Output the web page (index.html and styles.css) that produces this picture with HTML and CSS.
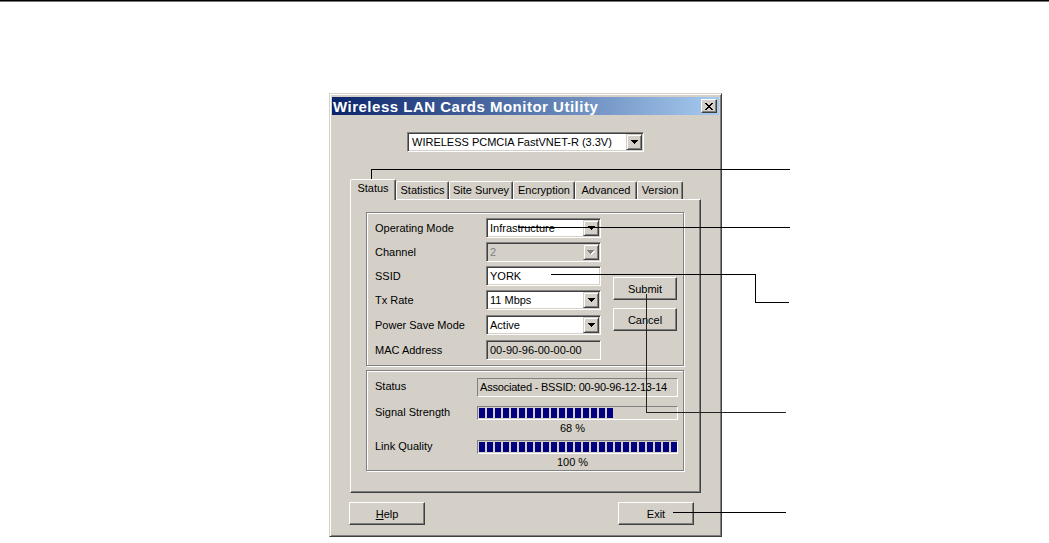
FILE: index.html
```html
<!DOCTYPE html>
<html lang="en">
<head>
<meta charset="utf-8">
<title>Wireless LAN Cards Monitor Utility</title>
<link rel="stylesheet" href="styles.css">
</head>
<body>
<div class="page">
  <div class="rule"></div>
  <div class="dialog">
    <div class="titlebar">
      <span class="title">Wireless LAN Cards Monitor Utility</span>
      <span class="close"><svg width="8" height="7" viewBox="0 0 8 7"><path d="M0 0h2v1H0z M6 0h2v1H6z M1 1h2v1H1z M5 1h2v1H5z M2 2h4v1H2z M3 3h2v1H3z M2 4h4v1H2z M1 5h2v1H1z M5 5h2v1H5z M0 6h2v1H0z M6 6h2v1H6z"/></svg></span>
    </div>
    <div class="client">
      <div class="combo device">
        <span class="value">WIRELESS PCMCIA FastVNET-R (3.3V)</span>
        <span class="drop"><svg width="7" height="4" viewBox="0 0 7 4"><path d="M0 0h7v1H0z M1 1h5v1H1z M2 2h3v1H2z M3 3h1v1H3z"/></svg></span>
      </div>
      <div class="tabs">
        <div class="tab selected">Status</div>
        <div class="tab">Statistics</div>
        <div class="tab">Site Survey</div>
        <div class="tab">Encryption</div>
        <div class="tab">Advanced</div>
        <div class="tab">Version</div>
      </div>
      <div class="panel">
        <div class="group settings">
          <div class="form">
            <span class="label">Operating Mode</span>
            <div class="combo field"><span class="value">Infrastructure</span><span class="drop"><svg width="7" height="4" viewBox="0 0 7 4"><path d="M0 0h7v1H0z M1 1h5v1H1z M2 2h3v1H2z M3 3h1v1H3z"/></svg></span></div>
            <span class="label">Channel</span>
            <div class="combo field disabled"><span class="value">2</span><span class="drop"><svg width="8" height="5" viewBox="0 0 8 5"><path class="hl" d="M1 1h7v1H1z M2 2h5v1H2z M3 3h3v1H3z M4 4h1v1H4z"/><path class="gr" d="M0 0h7v1H0z M1 1h5v1H1z M2 2h3v1H2z M3 3h1v1H3z"/></svg></span></div>
            <span class="label">SSID</span>
            <div class="edit field"><span class="value">YORK</span></div>
            <span class="label">Tx Rate</span>
            <div class="combo field"><span class="value">11 Mbps</span><span class="drop"><svg width="7" height="4" viewBox="0 0 7 4"><path d="M0 0h7v1H0z M1 1h5v1H1z M2 2h3v1H2z M3 3h1v1H3z"/></svg></span></div>
            <span class="label">Power Save Mode</span>
            <div class="combo field"><span class="value">Active</span><span class="drop"><svg width="7" height="4" viewBox="0 0 7 4"><path d="M0 0h7v1H0z M1 1h5v1H1z M2 2h3v1H2z M3 3h1v1H3z"/></svg></span></div>
            <span class="label">MAC Address</span>
            <div class="edit field readonly"><span class="value">00-90-96-00-00-00</span></div>
          </div>
          <div class="actions">
            <button class="btn small">Submit</button>
            <button class="btn small">Cancel</button>
          </div>
        </div>
        <div class="group status">
          <div class="srow">
            <span class="slabel">Status</span>
            <div class="static">Associated - BSSID: 00-90-96-12-13-14</div>
          </div>
          <div class="srow bar-row">
            <span class="slabel">Signal Strength</span>
            <div class="progress"><i></i><i></i><i></i><i></i><i></i><i></i><i></i><i></i><i></i><i></i><i></i><i></i><i></i><i></i><i></i><i></i><i></i></div>
          </div>
          <div class="pct">68 %</div>
          <div class="srow bar-row second">
            <span class="slabel">Link Quality</span>
            <div class="progress"><i></i><i></i><i></i><i></i><i></i><i></i><i></i><i></i><i></i><i></i><i></i><i></i><i></i><i></i><i></i><i></i><i></i><i></i><i></i><i></i><i></i><i></i><i></i><i></i><i></i></div>
          </div>
          <div class="pct">100 %</div>
        </div>
      </div>
      <div class="footer">
        <button class="btn wide"><u>H</u>elp</button>
        <button class="btn wide">Exit</button>
      </div>
    </div>
  </div>
  <svg class="callouts" width="1049" height="543" viewBox="0 0 1049 543">
    <path d="M371.5 179 V169.5 H790"/>
    <path d="M518 227.5 H790"/>
    <path d="M551 274.5 H755.5 V302.5 H789"/>
    <path class="soft" d="M646.5 294 V412.5 H786"/>
    <path d="M673 512.5 H786"/>
  </svg>
</div>
</body>
</html>
```

FILE: styles.css
```css
* { box-sizing: border-box; }
html, body { margin: 0; padding: 0; background: #fff; }
body { font-family: "Liberation Sans", Arial, sans-serif; font-size: 11px; color: #000; }

.page { position: relative; width: 1049px; height: 543px; overflow: hidden; }
.rule { height: 1px; background: #000; box-shadow: 0 1px 0 #777; }

/* window */
.dialog {
  width: 393px; height: 444px;
  margin: 92px 0 0 329px;
  display: flex; flex-direction: column;
  background: #d4d0c8;
  border: 1px solid; border-color: #d4d0c8 #404040 #404040 #d4d0c8;
  box-shadow: inset 1px 1px #fff, inset -1px -1px #808080;
  padding: 3px 2px 2px 2px;
}
.titlebar {
  height: 18px; flex: none;
  display: flex; align-items: center;
  padding-left: 1px;
  background: linear-gradient(to right, #0a246a, #a6caf0);
  color: #fff;
}
.title { font-weight: bold; font-size: 15px; letter-spacing: 0.5px; white-space: nowrap; }
.close {
  margin-left: auto; margin-right: 2px;
  width: 16px; height: 14px;
  display: flex; align-items: center; justify-content: center;
  background: #d4d0c8;
  border: 1px solid; border-color: #fff #404040 #404040 #fff;
  box-shadow: inset -1px -1px #808080;
}
.close svg { display: block; fill: #000; }

.client { flex: 1; display: flex; flex-direction: column; }

/* combo / edit fields */
.combo, .edit {
  display: flex; align-items: stretch;
  height: 20px;
  border: 1px solid; border-color: #808080 #fff #fff #808080;
  box-shadow: inset 1px 1px #404040, inset -1px -1px #d4d0c8;
  background: #fff;
  padding: 1px;
}
.value { flex: 1; padding-left: 2px; line-height: 16px; white-space: nowrap; overflow: hidden; }
.drop {
  width: 16px; flex: none;
  display: flex; align-items: center; justify-content: center;
  background: #d4d0c8;
  border: 1px solid; border-color: #d4d0c8 #404040 #404040 #d4d0c8;
  box-shadow: inset 1px 1px #fff, inset -1px -1px #808080;
}
.drop svg { display: block; fill: #000; }
.drop .hl { fill: #fff; }
.drop .gr { fill: #808080; }

.device { width: 237px; margin-top: 17px; align-self: center; }
.device .value { padding-left: 3px; }

/* tabs */
.tabs {
  display: flex; align-items: flex-end;
  height: 20px; margin: 27px 0 0 18px;
  position: relative; z-index: 1;
}
.tab {
  height: 18px;
  background: #d4d0c8;
  border: 1px solid; border-bottom: none;
  border-color: #fff #404040 transparent #fff;
  box-shadow: inset -1px 0 #808080;
  border-radius: 2px 2px 0 0;
  line-height: 16px; text-align: center; white-space: nowrap;
}
.tab.selected { height: 21px; margin-bottom: -1px; line-height: 17px; }
.tab:nth-child(1) { width: 46px; }
.tab:nth-child(2) { width: 53px; }
.tab:nth-child(3) { width: 64px; }
.tab:nth-child(4) { width: 62px; }
.tab:nth-child(5) { width: 62px; }
.tab:nth-child(6) { width: 46px; }

.panel {
  width: 351px; height: 294px; margin-left: 18px;
  border: 1px solid; border-color: #fff #404040 #404040 #fff;
  box-shadow: inset -1px -1px #808080;
  padding: 12px 0 0 15px;
}

/* group boxes */
.group {
  width: 318px;
  border: 1px solid #808080;
  box-shadow: 1px 1px 0 #fff, inset 1px 1px 0 #fff;
}
.settings { height: 154px; padding: 5px 0 0 8px; display: flex; }
.form {
  display: grid;
  grid-template-columns: 111px 115px;
  grid-template-rows: 24px 24px 24px 25px 25px 20px;
  align-items: start;
}
.label { height: 20px; line-height: 20px; white-space: nowrap; }
.field { width: 115px; }
.disabled { background: #d4d0c8; }
.disabled .value { color: #808080; }
.readonly { background: #d4d0c8; }

.actions { display: flex; flex-direction: column; gap: 8px; margin-left: 12px; padding-top: 59px; }

.btn {
  font: inherit; color: #000; padding: 0; margin: 0;
  background: #d4d0c8;
  border: 1px solid; border-color: #fff #404040 #404040 #fff;
  box-shadow: inset -1px -1px #808080;
  height: 23px; text-align: center; line-height: 20px;
}
.btn.small { width: 64px; }
.btn.wide { width: 76px; }

.status { height: 101px; margin-top: 4px; padding: 7px 0 0 8px; }
.srow { display: flex; align-items: center; height: 19px; }
.slabel { width: 102px; flex: none; white-space: nowrap; padding-bottom: 3px; }
.static {
  width: 201px; height: 19px;
  border: 1px solid; border-color: #808080 #fff #fff #808080;
  padding-left: 2px; line-height: 17px; white-space: nowrap;
  letter-spacing: -0.2px;
}
.bar-row { height: 14px; margin-top: 9px; }
.bar-row.second { margin-top: 4px; }
.progress {
  width: 201px; height: 14px;
  border: 1px solid; border-color: #808080 #fff #fff #808080;
  padding: 1px 0 1px 1px;
  display: flex; gap: 2px;
}
.progress i { width: 6px; height: 10px; background: #000080; flex: none; }
.pct { margin-left: 102px; width: 191px; height: 16px; line-height: 16px; text-align: center; }

.footer {
  display: flex; justify-content: space-between;
  margin-top: 9px; padding: 0 25px 0 17px;
}

/* documentation callouts */
.callouts { position: absolute; left: 0; top: 0; pointer-events: none; }
.callouts path { fill: none; stroke: #000; stroke-width: 1; shape-rendering: crispEdges; }
.callouts .soft { stroke: #222; }
```
